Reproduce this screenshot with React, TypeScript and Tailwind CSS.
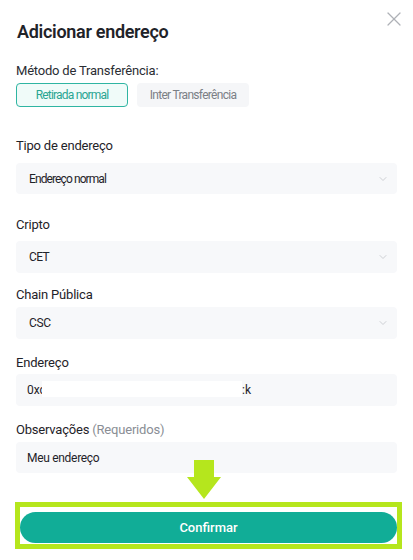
import { ChevronDown, X } from "lucide-react";

const font = { fontFamily: "Roboto, 'Noto Sans', sans-serif" };

const Chevron = () => (
  <ChevronDown className="size-[12px] text-[#bfc2c7]" strokeWidth={1.5} />
);

const App = () => {
  return (
    <div className="relative w-[413px] h-[560px] bg-white text-[#1f2329]" style={font}>
      {/* close */}
      <button className="absolute left-[382px] top-[7px] text-[#aeb1b7]">
        <X className="size-[24px]" strokeWidth={1.2} />
      </button>

      <div className="px-[16px] pt-[20px] flex flex-col">
        <h2 className="text-[18px] leading-[24px] font-semibold tracking-[-0.3px] ml-px">
          Adicionar endereço
        </h2>

        {/* method */}
        <p className="mt-[17px] text-[13px] leading-5 tracking-[-0.2px] text-[#2a2d33]">
          Método de Transferência:
        </p>
        <div className="mt-[2px] flex gap-[9px]">
          <button className="w-[112px] h-[24px] rounded-[4px] border border-[#2fb5a2] bg-[#f0fbf9] text-[12px] tracking-[-0.8px] text-[#2aa592]">
            Retirada normal
          </button>
          <button className="w-[112px] h-[24px] rounded-[4px] bg-[#f5f6f8] text-[12px] tracking-[-0.7px] text-[#7b7f86]">
            Inter Transferência
          </button>
        </div>

        {/* tipo */}
        <p className="mt-[29px] text-[13px] leading-5 tracking-[-0.2px]">Tipo de endereço</p>
        <div className="mt-[7px] h-[31px] rounded-[4px] bg-[#f7f8fa] pl-[13px] pr-[8px] flex items-center justify-between text-[12px] tracking-[-0.9px]">
          <span>Endereço normal</span>
          <Chevron />
        </div>

        {/* cripto */}
        <p className="mt-[21px] text-[13px] leading-5 tracking-[-0.2px]">Cripto</p>
        <div className="mt-[6px] h-[32px] rounded-[4px] bg-[#f7f8fa] pl-[13px] pr-[8px] flex items-center justify-between text-[12px] tracking-[-0.6px]">
          <span>CET</span>
          <Chevron />
        </div>

        {/* chain */}
        <p className="mt-[12px] text-[13px] leading-5 tracking-[-0.2px]">Chain Pública</p>
        <div className="mt-[2px] h-[32px] rounded-[4px] bg-[#f7f8fa] pl-[13px] pr-[8px] flex items-center justify-between text-[12px] tracking-[-0.3px]">
          <span>CSC</span>
          <Chevron />
        </div>

        {/* endereco */}
        <p className="mt-[14px] text-[13px] leading-5 tracking-[-0.2px]">Endereço</p>
        <div className="mt-[1px] h-[32px] rounded-[4px] bg-[#f7f8fa] pl-[11px] flex items-center text-[12px] relative">
          <span>0xc</span>
          <div className="absolute left-[26px] top-[7px] w-[200px] h-[16px] bg-white" />
          <span className="absolute left-[226px]">:k</span>
        </div>

        {/* observacoes */}
        <p className="mt-[14px] text-[13px] leading-5 tracking-[-0.2px]">
          Observações <span className="text-[#8a8e95]">(Requeridos)</span>
        </p>
        <div className="mt-[2px] h-[31px] rounded-[4px] bg-[#f7f8fa] pl-[11px] flex items-center text-[12px] tracking-[-0.3px]">
          <span>Meu endereço</span>
        </div>

        {/* confirm, highlighted */}
        <div className="mt-[29px] -ml-px w-[387px] border-[5px] border-[#b5e61d] pt-[5px] pb-px">
          <button className="w-full h-[31px] rounded-full bg-[#11ad97] text-white text-[13px] font-medium">
            Confirmar
          </button>
        </div>
      </div>

      {/* arrow annotation */}
      <svg className="absolute left-[187px] top-[460px]" width="34" height="40" viewBox="0 0 34 40">
        <path d="M7 0 H27 V17 H34 L17 39 L0 17 H7 Z" fill="#b5e61d" />
      </svg>
    </div>
  );
};

export default App;
